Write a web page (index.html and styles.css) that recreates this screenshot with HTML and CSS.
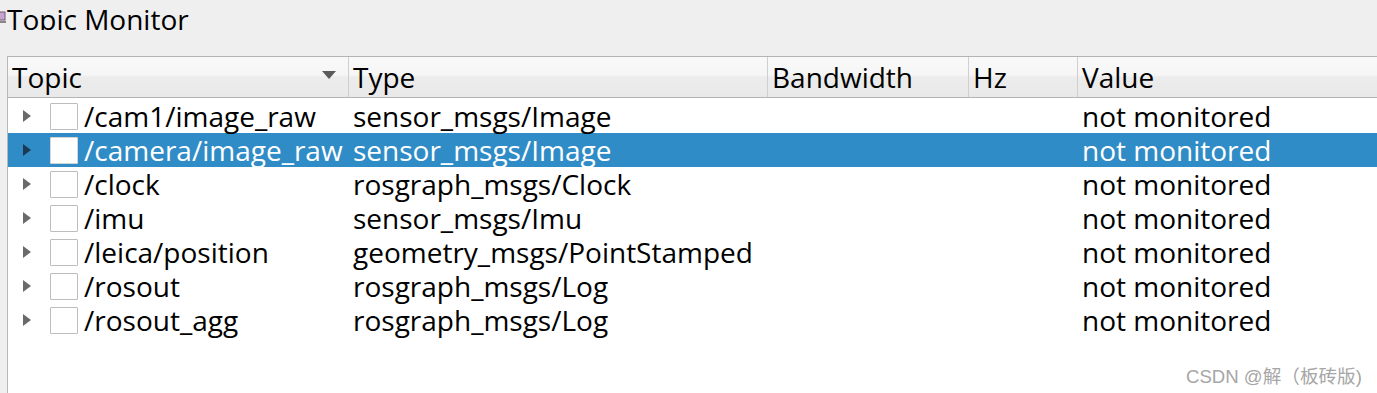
FILE: index.html
```html
<!DOCTYPE html>
<html>
<head>
<meta charset="utf-8">
<link rel="stylesheet" href="styles.css">
</head>
<body>
<div class="title">
  <svg class="title-icon" width="7" height="14" viewBox="0 0 7 14"><rect x="-3" y="1" width="8" height="8" fill="#c9a3cf" stroke="#6b5a70" stroke-width="1"/><rect x="-3" y="10" width="9" height="2" fill="#888"/></svg>
  <span class="title-text">Topic Monitor</span>
</div>
<div class="tree">
  <div class="header">
    <div class="hcell hcell-topic">Topic<span class="sort"></span></div>
    <div class="hcell">Type</div>
    <div class="hcell">Bandwidth</div>
    <div class="hcell">Hz</div>
    <div class="hcell hcell-last">Value</div>
  </div>
  <div class="body">
    <div class="row"><div class="cell topic"><span class="arrow"></span><span class="check"></span>/cam1/image_raw</div><div class="cell">sensor_msgs/Image</div><div class="cell"></div><div class="cell"></div><div class="cell">not monitored</div></div>
    <div class="row selected"><div class="cell topic"><span class="arrow"></span><span class="check"></span>/camera/image_raw</div><div class="cell">sensor_msgs/Image</div><div class="cell"></div><div class="cell"></div><div class="cell">not monitored</div></div>
    <div class="row"><div class="cell topic"><span class="arrow"></span><span class="check"></span>/clock</div><div class="cell">rosgraph_msgs/Clock</div><div class="cell"></div><div class="cell"></div><div class="cell">not monitored</div></div>
    <div class="row"><div class="cell topic"><span class="arrow"></span><span class="check"></span>/imu</div><div class="cell">sensor_msgs/Imu</div><div class="cell"></div><div class="cell"></div><div class="cell">not monitored</div></div>
    <div class="row"><div class="cell topic"><span class="arrow"></span><span class="check"></span>/leica/position</div><div class="cell">geometry_msgs/PointStamped</div><div class="cell"></div><div class="cell"></div><div class="cell">not monitored</div></div>
    <div class="row"><div class="cell topic"><span class="arrow"></span><span class="check"></span>/rosout</div><div class="cell">rosgraph_msgs/Log</div><div class="cell"></div><div class="cell"></div><div class="cell">not monitored</div></div>
    <div class="row"><div class="cell topic"><span class="arrow"></span><span class="check"></span>/rosout_agg</div><div class="cell">rosgraph_msgs/Log</div><div class="cell"></div><div class="cell"></div><div class="cell">not monitored</div></div>
  </div>
</div>
<div class="watermark">CSDN @解（板砖版)</div>
</body>
</html>
```
FILE: styles.css
```css
html, body {
  margin: 0;
  padding: 0;
  background: #efefef;
  width: 1377px;
  height: 393px;
  overflow: hidden;
  font-family: "Open Sans", "Noto Sans", sans-serif;
  color: #000;
}
.title {
  height: 30px;
  overflow: hidden;
  display: flex;
  align-items: flex-start;
}
.title-icon {
  margin-top: 11px;
  flex: none;
}
.title-text {
  font-size: 28px;
  line-height: 38px;
  margin-top: 0;
}
.tree {
  margin: 26px 0 0 7px;
  border-left: 1px solid #b8b8b8;
  height: 340px;
  background: #fff;
}
.header {
  display: grid;
  grid-template-columns: 341px 419px 201px 109px 1fr;
  border-top: 1px solid #b4b4b4;
  border-bottom: 1px solid #b4b4b4;
  background: linear-gradient(#f9f9f9, #f6f6f6 45%, #ececec 50%, #e9e9e9);
  height: 40px;
}
.hcell {
  border-right: 1px solid #cfcfcf;
  padding-left: 4px;
  font-size: 28px;
  line-height: 40px;
  position: relative;
  white-space: nowrap;
}
.hcell-last { border-right: none; }
.sort {
  position: absolute;
  right: 12px;
  top: 14px;
  width: 0;
  height: 0;
  border-left: 7px solid transparent;
  border-right: 7px solid transparent;
  border-top: 8px solid #5a5a5a;
}
.body { padding-top: 1px; }
.row {
  display: grid;
  grid-template-columns: 341px 419px 201px 109px 1fr;
  height: 34px;
  font-size: 28px;
  line-height: 34px;
}
.row.selected {
  background: #308cc6;
  color: #fff;
}
.cell {
  padding-left: 4px;
  white-space: nowrap;
}
.topic {
  display: flex;
  align-items: center;
  padding-left: 0;
  overflow: visible;
}
.arrow {
  width: 0;
  height: 0;
  border-top: 6px solid transparent;
  border-bottom: 6px solid transparent;
  border-left: 8px solid #6a6a6a;
  margin-left: 15px;
  margin-right: 19px;
  flex: none;
}
.selected .arrow { border-left-color: #1c3b52; }
.check {
  width: 26px;
  height: 25px;
  border: 1px solid #bdbdbd;
  background: #fff;
  flex: none;
  margin-right: 6px;
  border-radius: 1px;
}
.selected .check { border-color: #d5d5d5; }
.watermark {
  position: absolute;
  left: 1186px;
  top: 361px;
  font-family: "Liberation Sans", "Noto Sans CJK SC", sans-serif;
  font-size: 18.6px;
  color: #a6a6a6;
  white-space: nowrap;
}
```
